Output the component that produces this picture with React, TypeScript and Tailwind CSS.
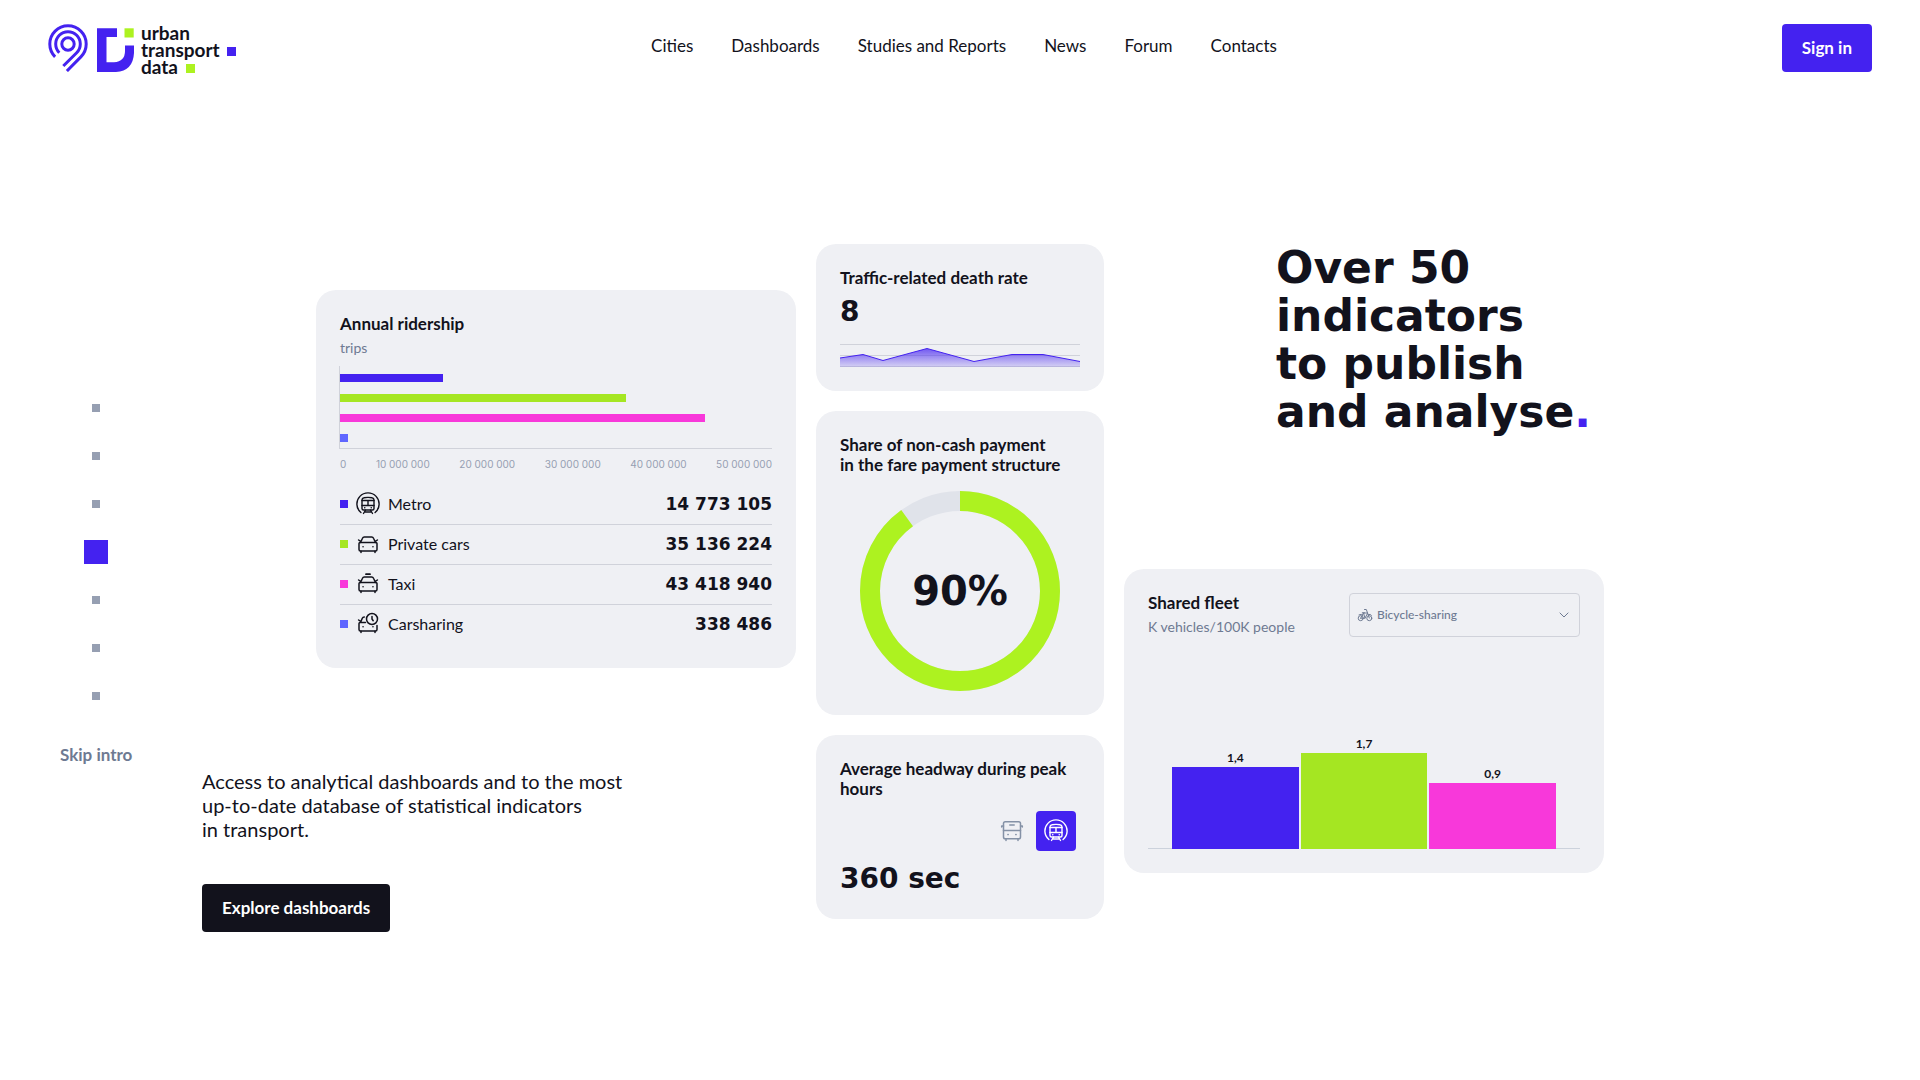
import { useState } from "react";
import type { ReactNode } from "react";

type IconProps = { className?: string };

const wide = "font-['DejaVu_Sans',sans-serif] font-bold";

function LogoMark() {
  return (
    <svg viewBox="0 0 86 48" className="h-12 w-[86px]" fill="none" aria-hidden="true">
      <g stroke="#4422f0" strokeWidth="3">
        <circle cx="20" cy="20" r="6.2" />
        <path d="M11.3 28.7A12.3 12.3 0 1 1 28.7 28.7L15.3 42" />
        <path d="M7.1 32.9A18.2 18.2 0 1 1 32.9 32.9L18.9 47" />
      </g>
      <path
        fill="#4422f0"
        d="M49 4.300H69V13H58.500V38.300H66Q77 37.500 77 27V21.500H86V29Q85 47 68 48H49Z"
      />
      <rect x="76.500" y="4.300" width="9.200" height="9.200" fill="#adf220" />
    </svg>
  );
}

function MetroIcon({ className = "size-6" }: IconProps) {
  return (
    <svg viewBox="0 0 24 24" className={className} fill="none" stroke="currentColor" strokeWidth="1.400" strokeLinecap="round" strokeLinejoin="round" aria-hidden="true">
      <path d="M4.900 20.500A11.100 11.100 0 1 1 19.100 20.500" />
      <path d="M6 8Q6 6 8 5.700Q12 5 16 5.700Q18 6 18 8V16.500Q18 18 16.500 18H7.500Q6 18 6 16.500Z" />
      <path d="M6 8.500H18M6 13.500H18M12 8.500V13.500" />
      <path d="M8.700 15.800H8.800M15.200 15.800H15.300" strokeWidth="1.500" />
      <path d="M9.500 18L7.500 21.500M14.500 18L16.500 21.500M8.500 20H15.500" />
    </svg>
  );
}

function CarBody() {
  return (
    <>
      <path d="M3 11.500Q3 10.500 4.200 10.500H19.800Q21 10.500 21 11.500V17.500Q21 19 19.500 19H4.500Q3 19 3 17.500Z" />
      <path d="M5 19.200V20.500M19 19.200V20.500" />
      <path d="M7 14.800H7.100M16.900 14.800H17" strokeWidth="1.500" />
    </>
  );
}

function CarIcon({ className = "size-6" }: IconProps) {
  return (
    <svg viewBox="0 0 24 24" className={className} fill="none" stroke="currentColor" strokeWidth="1.500" strokeLinecap="round" strokeLinejoin="round" aria-hidden="true">
      <CarBody />
      <path d="M4.500 10.500L6.500 6.200Q7 5 8.300 5H15.700Q17 5 17.500 6.200L19.500 10.500M2.600 8L4.300 9.200M21.400 8L19.700 9.200" />
    </svg>
  );
}

function TaxiIcon({ className = "size-6" }: IconProps) {
  return (
    <svg viewBox="0 0 24 24" className={className} fill="none" stroke="currentColor" strokeWidth="1.500" strokeLinecap="round" strokeLinejoin="round" aria-hidden="true">
      <CarBody />
      <path d="M4.500 10.500L6.500 6.200Q7 5 8.300 5H15.700Q17 5 17.500 6.200L19.500 10.500M2.600 8L4.300 9.200M21.400 8L19.700 9.200" />
      <path d="M10 2.200H14" strokeWidth="1.800" />
    </svg>
  );
}

function CarsharingIcon({ className = "size-6" }: IconProps) {
  return (
    <svg viewBox="0 0 24 24" className={className} fill="none" stroke="currentColor" strokeWidth="1.500" strokeLinecap="round" strokeLinejoin="round" aria-hidden="true">
      <path d="M9.500 10.500H4.200Q3 10.500 3 11.500V17.500Q3 19 4.500 19H19.500Q21 19 21 17.500V13.500M4.500 10.500L6.300 6.200Q6.800 5 8.300 5M2.600 8L4.300 9.200" />
      <path d="M5 19.200V20.500M19 19.200V20.500" />
      <path d="M7 14.800H7.100M16.900 14.800H17" strokeWidth="1.500" />
      <circle cx="16" cy="7" r="5.500" />
      <path d="M16 4.500V7L17.200 8.700" />
    </svg>
  );
}

function BusIcon({ className = "size-6" }: IconProps) {
  return (
    <svg viewBox="0 0 24 24" className={className} fill="none" stroke="currentColor" strokeWidth="1.500" strokeLinecap="round" strokeLinejoin="round" aria-hidden="true">
      <rect x="3.500" y="2.700" width="17" height="17" rx="1.800" />
      <path d="M3.500 11.500H20.500M3.500 7H1.700V8M20.500 7H22.300V8M6 19.800V21.500M18 19.800V21.500M9.800 6H14.200" />
      <path d="M8 15.500H8.100M15.900 15.500H16" strokeWidth="1.700" />
    </svg>
  );
}

function BicycleIcon({ className = "size-4" }: IconProps) {
  return (
    <svg viewBox="0 0 16 16" className={className} fill="none" stroke="currentColor" strokeLinecap="round" strokeLinejoin="round" aria-hidden="true">
      <circle cx="3.700" cy="11.200" r="2.500" />
      <circle cx="12.300" cy="11.200" r="2.500" />
      <path d="M7.500 2.500H9.300L12.300 11M3.700 11.200L6.500 6H10.500M3.700 11.200H8L10.500 6.500M5.300 5.800H7.500M6.500 6L8 11M2 7.800Q4.500 6.300 6 8.500M11.500 7.500Q13.500 6.800 14.500 8.300" />
    </svg>
  );
}

function Card({ className = "", children }: { className?: string; children: ReactNode }) {
  return <section className={`rounded-[20px] bg-[#eff0f4] p-6 ${className}`}>{children}</section>;
}

function CardTitle({ children }: { children: ReactNode }) {
  return <h2 className="text-[17px] leading-5 font-bold">{children}</h2>;
}

const navItems = ["Cities", "Dashboards", "Studies and Reports", "News", "Forum", "Contacts"];

function Header() {
  return (
    <header className="grid h-24 grid-cols-[1fr_auto_1fr] items-start px-12 pt-6">
      <a href="#home" className="flex w-fit gap-[7px]" aria-label="Urban transport data">
        <LogoMark />
        <span className="text-[19px] leading-[17px] font-bold">
          <span className="block">urban</span>
          <span className="flex items-center gap-[7px]">
            transport
            <span className="mt-1 size-[9px] bg-[#4422f0]" />
          </span>
          <span className="flex items-center gap-2">
            data
            <span className="mt-1 size-[9px] bg-[#adf220]" />
          </span>
        </span>
      </a>
      <nav className="flex gap-[38px] pt-3 pl-2 text-[17px] leading-5">
        {navItems.map((item) => (
          <a key={item} href={`#${item.toLowerCase().replaceAll(" ", "-")}`}>
            {item}
          </a>
        ))}
      </nav>
      <button type="button" className="h-12 justify-self-end rounded bg-[#4422f0] px-5 text-[17px] leading-5 font-bold text-white">
        Sign in
      </button>
    </header>
  );
}

function StepNav() {
  const [active, setActive] = useState(3);
  return (
    <nav aria-label="Intro steps" className="mt-[140px] flex flex-col items-center self-start pl-15">
      {[0, 1, 2, 3, 4, 5, 6].map((step) => (
        <button
          key={step}
          type="button"
          aria-label={`Step ${step + 1}`}
          aria-current={step === active ? "step" : undefined}
          onClick={() => setActive(step)}
          className="flex size-12 items-center justify-center"
        >
          <span className={step === active ? "size-6 bg-[#4422f0]" : "size-2 bg-[#969fb2]"} />
        </button>
      ))}
      <button type="button" className="mt-[25px] text-[17px] leading-5 font-bold whitespace-nowrap text-[#6e7a92]">
        Skip intro
      </button>
    </nav>
  );
}

const ridership = [
  { name: "Metro", value: "14 773 105", share: 23.8, color: "bg-[#4422f0]", Icon: MetroIcon },
  { name: "Private cars", value: "35 136 224", share: 66.2, color: "bg-[#a5e622]", Icon: CarIcon },
  { name: "Taxi", value: "43 418 940", share: 84.5, color: "bg-[#f838da]", Icon: TaxiIcon },
  { name: "Carsharing", value: "338 486", share: 1.9, color: "bg-[#5f66ff]", Icon: CarsharingIcon },
];

const ticks = ["0", "10 000 000", "20 000 000", "30 000 000", "40 000 000", "50 000 000"];

function RidershipCard() {
  return (
    <Card className="w-[480px] self-end">
      <CardTitle>Annual ridership</CardTitle>
      <p className="mt-1 text-sm leading-5 text-[#6e7a92]">trips</p>
      <div className="mt-2 -ml-px flex flex-col gap-3 border-b border-l border-[#d0d2da] pt-2 pb-[6px]">
        {ridership.map((row) => (
          <div key={row.name} className={`h-2 ${row.color}`} style={{ width: `${row.share}%` }} />
        ))}
      </div>
      <div className="mt-[7px] flex justify-between font-['Inter',sans-serif] text-[10px] leading-4 text-[#969fb2]">
        {ticks.map((tick) => (
          <span key={tick}>{tick}</span>
        ))}
      </div>
      <table className="mt-3 w-full border-collapse">
        <tbody>
          {ridership.map((row) => (
            <tr key={row.name} className="h-10 border-b border-[#d0d2da] last:border-b-0">
              <th scope="row" className="p-0 text-left font-normal">
                <span className="flex items-center gap-2 text-base leading-5">
                  <span className={`size-2 ${row.color}`} />
                  <row.Icon />
                  {row.name}
                </span>
              </th>
              <td className={`p-0 text-right text-[17px] leading-5 ${wide}`}>{row.value}</td>
            </tr>
          ))}
        </tbody>
      </table>
    </Card>
  );
}

function DeathRateCard() {
  return (
    <Card>
      <CardTitle>Traffic-related death rate</CardTitle>
      <p className={`mt-2 text-[28px] leading-8 ${wide}`}>8</p>
      <svg viewBox="0 0 240 23" preserveAspectRatio="none" className="mt-4 h-[23px] w-full" fill="none" aria-hidden="true">
        <defs>
          <linearGradient id="rate" x1="0" y1="4" x2="0" y2="23" gradientUnits="userSpaceOnUse">
            <stop stopColor="#4422f0" stopOpacity="0.750" />
            <stop offset="1" stopColor="#4422f0" stopOpacity="0.150" />
          </linearGradient>
        </defs>
        <path d="M0 .5H240M0 11.500H240M0 22.500H240" stroke="#d0d2da" />
        <path d="M0 14L23 10.500L43 16.500L87 4.500L134 17.500L172 10.500H203L240 17.500V23H0Z" fill="url(#rate)" />
        <path d="M0 14L23 10.500L43 16.500L87 4.500L134 17.500L172 10.500H203L240 17.500" stroke="#4422f0" />
      </svg>
    </Card>
  );
}

function PaymentCard() {
  return (
    <Card>
      <CardTitle>
        Share of non-cash payment
        <br />
        in the fare payment structure
      </CardTitle>
      <div className="mx-auto mt-4 grid size-[200px] place-items-center">
        <svg viewBox="0 0 200 200" className="col-start-1 row-start-1 size-full -rotate-90" fill="none" strokeWidth="20" aria-hidden="true">
          <circle cx="100" cy="100" r="90" stroke="#e0e3ea" />
          <circle cx="100" cy="100" r="90" stroke="#adf220" pathLength="100" strokeDasharray="90 100" />
        </svg>
        <p className={`col-start-1 row-start-1 text-[40px] leading-10 ${wide}`}>90%</p>
      </div>
    </Card>
  );
}

function HeadwayCard() {
  return (
    <Card>
      <CardTitle>Average headway during peak hours</CardTitle>
      <div className="mt-3 mr-1 flex justify-end gap-1">
        <button type="button" aria-label="Bus" className="grid size-10 place-items-center rounded text-[#8491a6]">
          <BusIcon />
        </button>
        <button type="button" aria-label="Metro" aria-pressed="true" className="grid size-10 place-items-center rounded bg-[#4422f0] text-white">
          <MetroIcon />
        </button>
      </div>
      <p className={`mt-3 text-[28px] leading-8 ${wide}`}>360 sec</p>
    </Card>
  );
}

const fleet = [
  { label: "1,4", bar: "h-[82px] bg-[#4422f0]" },
  { label: "1,7", bar: "h-24 bg-[#a5e622]" },
  { label: "0,9", bar: "h-[66px] bg-[#f838da]" },
];

function FleetCard() {
  return (
    <Card className="flex h-[304px] w-[480px] flex-col">
      <div className="flex items-start justify-between">
        <div>
          <CardTitle>Shared fleet</CardTitle>
          <p className="mt-1 text-sm leading-5 text-[#6e7a92]">K vehicles/100K people</p>
        </div>
        <div className="grid h-11 w-[231px] items-center text-[#6e7a92]">
          <select
            aria-label="Vehicle type"
            className="col-start-1 row-start-1 h-full w-full appearance-none rounded border border-[#d0d2da] bg-transparent pl-[27px] text-xs leading-4 font-medium"
          >
            <option>Bicycle-sharing</option>
            <option>Carsharing</option>
          </select>
          <BicycleIcon className="pointer-events-none col-start-1 row-start-1 ml-2 size-4" />
          <svg viewBox="0 0 10 6" className="pointer-events-none col-start-1 row-start-1 mr-[11px] h-[6px] w-[10px] justify-self-end" fill="none" stroke="currentColor" aria-hidden="true">
            <path d="M.7.700L5 5L9.300.700" />
          </svg>
        </div>
      </div>
      <div className="mt-auto flex items-end">
        <span className="h-px w-6 bg-[#ccd2dc]" />
        <div className="flex flex-1 items-end gap-0.5">
          {fleet.map((item) => (
            <div key={item.label} className="flex flex-1 flex-col items-center text-xs leading-4 font-bold">
              {item.label}
              <div className={`mt-px w-full ${item.bar}`} />
            </div>
          ))}
        </div>
        <span className="h-px w-6 bg-[#ccd2dc]" />
      </div>
    </Card>
  );
}

export default function App() {
  return (
    <div className="min-h-screen bg-white font-['Lato',sans-serif] text-[#12121c]">
      <Header />
      <main className="grid grid-cols-[1fr_288px_1fr] gap-5 pt-[148px]">
        <div className="flex justify-between">
          <StepNav />
          <div className="flex w-[594px] flex-col pt-[46px]">
            <RidershipCard />
            <p className="mt-[101px] text-xl leading-6">
              Access to analytical dashboards and to the most
              <br />
              up-to-date database of statistical indicators
              <br />
              in transport.
            </p>
            <button type="button" className="mt-[43px] h-12 self-start rounded bg-[#12121c] px-5 text-[17px] leading-5 font-bold text-white">
              Explore dashboards
            </button>
          </div>
        </div>
        <div className="flex flex-col gap-5">
          <DeathRateCard />
          <PaymentCard />
          <HeadwayCard />
        </div>
        <div>
          <h1 className={`ml-[152px] text-[44px] leading-12 whitespace-nowrap ${wide}`}>
            Over 50
            <br />
            indicators
            <br />
            to publish
            <br />
            and analyse<span className="text-[#4422f0]">.</span>
          </h1>
          <div className="mt-[133px]">
            <FleetCard />
          </div>
        </div>
      </main>
    </div>
  );
}
